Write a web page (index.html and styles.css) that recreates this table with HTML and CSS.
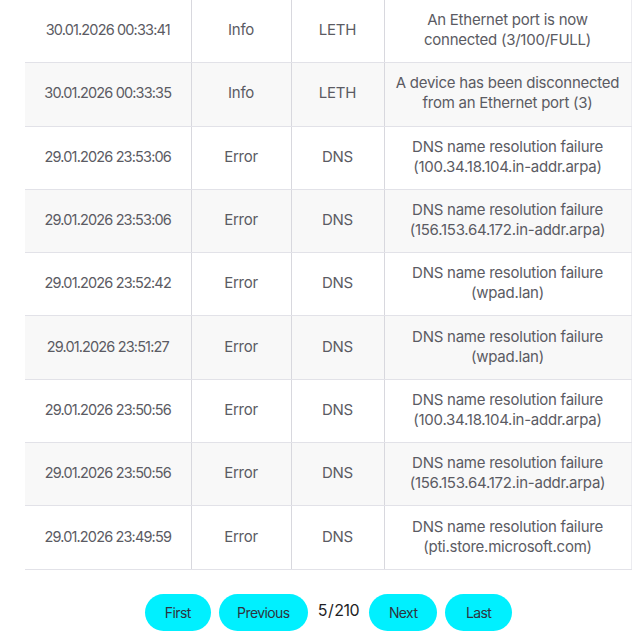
FILE: index.html
```html
<!DOCTYPE html>
<html>
<head>
<meta charset="utf-8">
<link rel="stylesheet" href="styles.css">
</head>
<body>
<div class="page">
  <table class="log">
    <tbody>
      <tr><td class="c-time">30.01.2026 00:33:41</td><td class="c-lvl">Info</td><td class="c-src">LETH</td><td class="c-msg">An Ethernet port is now<br>connected (3/100/FULL)</td></tr>
      <tr><td class="c-time">30.01.2026 00:33:35</td><td class="c-lvl">Info</td><td class="c-src">LETH</td><td class="c-msg">A device has been disconnected<br>from an Ethernet port (3)</td></tr>
      <tr><td class="c-time">29.01.2026 23:53:06</td><td class="c-lvl">Error</td><td class="c-src">DNS</td><td class="c-msg">DNS name resolution failure<br>(100.34.18.104.in-addr.arpa)</td></tr>
      <tr><td class="c-time">29.01.2026 23:53:06</td><td class="c-lvl">Error</td><td class="c-src">DNS</td><td class="c-msg">DNS name resolution failure<br>(156.153.64.172.in-addr.arpa)</td></tr>
      <tr><td class="c-time">29.01.2026 23:52:42</td><td class="c-lvl">Error</td><td class="c-src">DNS</td><td class="c-msg">DNS name resolution failure<br>(wpad.lan)</td></tr>
      <tr><td class="c-time">29.01.2026 23:51:27</td><td class="c-lvl">Error</td><td class="c-src">DNS</td><td class="c-msg">DNS name resolution failure<br>(wpad.lan)</td></tr>
      <tr><td class="c-time">29.01.2026 23:50:56</td><td class="c-lvl">Error</td><td class="c-src">DNS</td><td class="c-msg">DNS name resolution failure<br>(100.34.18.104.in-addr.arpa)</td></tr>
      <tr><td class="c-time">29.01.2026 23:50:56</td><td class="c-lvl">Error</td><td class="c-src">DNS</td><td class="c-msg">DNS name resolution failure<br>(156.153.64.172.in-addr.arpa)</td></tr>
      <tr><td class="c-time">29.01.2026 23:49:59</td><td class="c-lvl">Error</td><td class="c-src">DNS</td><td class="c-msg">DNS name resolution failure<br>(pti.store.microsoft.com)</td></tr>
    </tbody>
  </table>
  <div class="pager">
    <button class="pbtn first">First</button>
    <button class="pbtn prev">Previous</button>
    <span class="pinfo">5 / 210</span>
    <button class="pbtn next">Next</button>
    <button class="pbtn last">Last</button>
  </div>
</div>
</body>
</html>
```
FILE: styles.css
```css
html, body {
  margin: 0;
  padding: 0;
  background: #ffffff;
}
body {
  font-family: "Inter", "Noto Sans", sans-serif;
  color: #5b5b63;
  font-size: 15px;
}
.page {
  width: 606px;
  margin: -1px 0 0 25px;
}
.log {
  width: 606px;
  border-collapse: collapse;
  table-layout: fixed;
}
.log td {
  height: 63.3px;
  padding: 0 4px 2px;
  text-align: center;
  vertical-align: middle;
  line-height: 20px;
  letter-spacing: -0.25px;
  border-top: 1px solid #e2e2e8;
  border-bottom: 1px solid #e2e2e8;
  border-left: 1px solid #d8d8de;
  box-sizing: border-box;
}
.log td:first-child { border-left: none; }
.log td:last-child { border-right: 1px solid #ececf0; }
.log tr:nth-child(even) td { background: #f8f8f8; }
.log td.c-time {
  width: 166px;
  font-size: 14.5px;
  letter-spacing: -0.85px;
}
.c-lvl { width: 100px; }
.c-src { width: 93px; }
.c-msg { width: 247px; }
.pager {
  display: flex;
  justify-content: center;
  align-items: center;
  gap: 8px;
  margin-top: 24px;
  padding-left: 1px;
}
.pbtn {
  height: 37px;
  border: none;
  border-radius: 19px;
  background: #00f0ff;
  color: #2e3440;
  font-family: "Inter", "Noto Sans", sans-serif;
  font-size: 14px;
  letter-spacing: -0.6px;
  padding: 0;
  cursor: pointer;
}
.first { width: 66px; }
.prev { width: 89px; }
.next { width: 68px; }
.last { width: 67px; }
.pinfo {
  color: #1e1e24;
  font-size: 16px;
  letter-spacing: -0.5px;
  word-spacing: -3px;
  padding: 0 2px;
  margin-top: -4px;
}
```
